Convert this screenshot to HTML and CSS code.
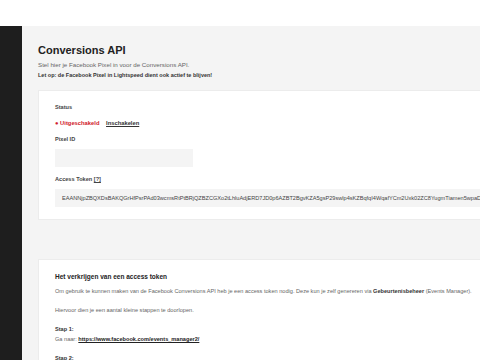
FILE: index.html
```html
<!DOCTYPE html>
<html lang="nl">
<head>
    <meta charset="UTF-8">
    <title>Conversions API</title>
    <link rel="stylesheet" href="styles.css">
</head>
<body>
    <div class="topbar"></div>
    <div class="layout">
        <aside class="sidebar"></aside>
        <main class="main">
            <h1>Conversions API</h1>
            <p class="intro">Stel hier je Facebook Pixel in voor de Conversions API.</p>
            <p class="intro strong">Let op: de Facebook Pixel in Lightspeed dient ook actief te blijven!</p>

            <section class="card">
                <div class="label">Status</div>
                <div class="status">
                    <span class="off">&#9679; Uitgeschakeld</span>
                    <a href="#" class="toggle">Inschakelen</a>
                </div>
                <div class="label">Pixel ID</div>
                <div class="input short"></div>
                <div class="label">Access Token <a href="#" class="help">[?]</a></div>
                <div class="input wide">EAANNjpZBQXDsBAKQGrHfPsrPAd03wcmsRtPtBRjQZBZCGXo2tLhluAdjERD7JD0p6AZBT2BgvKZA5gsP29swlp4sKZBqfqI4WqafYCm2Uxk02ZC8YugmTiamen5wpaDK</div>
            </section>

            <section class="card guide">
                <h2>Het verkrijgen van een access token</h2>
                <p>Om gebruik te kunnen maken van de Facebook Conversions API heb je een access token nodig. Deze kun je zelf genereren via <b>Gebeurtenisbeheer</b> (Events Manager).</p>
                <p class="gap">Hiervoor dien je een aantal kleine stappen te doorlopen.</p>
                <div class="step">Stap 1:</div>
                <p>Ga naar: <a href="#" class="link">https://www.facebook.com/events_manager2/</a></p>
                <div class="step">Stap 2:</div>
                <div class="shot"></div>
            </section>
        </main>
    </div>
</body>
</html>
```

FILE: styles.css
```css
body {
    margin: 0;
    font-family: "Liberation Sans", Arial, sans-serif;
    background: #fff;
    height: 360px;
    overflow: hidden;
}

.topbar {
    height: 26px;
    background: #fff;
}

.layout {
    display: flex;
    height: 334px;
}

.sidebar {
    width: 22px;
    flex-shrink: 0;
    background: #1e1e1e;
}

.main {
    flex: 1;
    min-width: 0;
    background: #f4f4f4;
    padding: 18px 0 0 16px;
    overflow: hidden;
}

h1 {
    margin: 0 0 4px;
    font-size: 11px;
    line-height: 12px;
    font-weight: 700;
    color: #222;
}

.intro {
    margin: 0;
    font-size: 6.2px;
    line-height: 10px;
    color: #666;
}

.intro.strong {
    font-size: 5.5px;
    font-weight: 700;
    color: #333;
}

.card {
    width: 560px;
    background: #fff;
    border: 1px solid #ececec;
    margin-top: 10px;
    padding: 11px 16px 12px;
}

.label {
    font-size: 5.6px;
    font-weight: 700;
    color: #444;
    line-height: 10px;
}

.help {
    color: #444;
}

.status {
    font-size: 5.8px;
    font-weight: 700;
    line-height: 10px;
    margin: 6px 0 6px;
}

.off {
    color: #d0182a;
}

.toggle {
    color: #333;
    margin-left: 5px;
}

.input {
    background: #f4f4f4;
    height: 18px;
    margin: 5px 0 7px;
    font-size: 5.6px;
    line-height: 18px;
    color: #444;
    padding-left: 7px;
    white-space: nowrap;
    overflow: hidden;
}

.input.short {
    width: 131px;
}

.input.wide {
    margin-bottom: 0;
}

.guide {
    margin-top: 39px;
    padding-top: 12px;
}

h2 {
    margin: 0 0 4px;
    font-size: 6.5px;
    font-weight: 700;
    color: #222;
    line-height: 10px;
}

.guide p {
    margin: 0;
    font-size: 5.6px;
    line-height: 10px;
    color: #666;
}

.guide p b {
    color: #333;
}

.guide p.gap {
    margin: 9px 0 9px;
}

.step {
    font-size: 5.6px;
    font-weight: 700;
    color: #333;
    line-height: 10px;
}

.link {
    color: #222;
    font-weight: 700;
}

.step + p {
    margin-bottom: 9px;
}

.shot {
    height: 20px;
    margin-left: 52px;
    border-top: 1px solid #b9b9b9;
    background: #ddd;
}
```
